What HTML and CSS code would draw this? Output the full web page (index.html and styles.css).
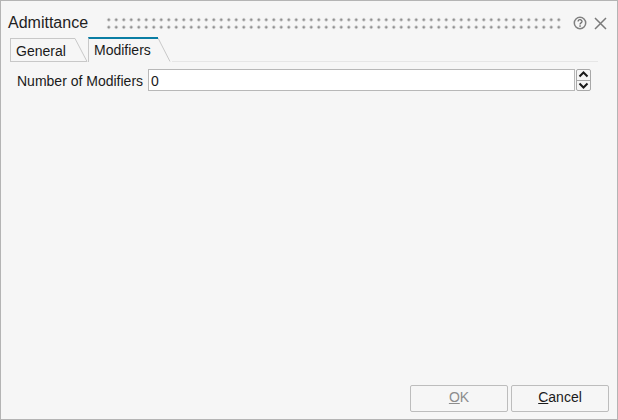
FILE: index.html
```html
<!DOCTYPE html>
<html lang="en">
<head>
    <meta charset="UTF-8">
    <meta name="viewport" content="width=device-width, initial-scale=1.0">
    <title>Admittance</title>
    <link rel="stylesheet" href="styles.css">
</head>
<body>
    <div class="dialog">
        <div class="title-bar">
            <span class="title">Admittance</span>
            <div class="grip"></div>
            <svg class="help-icon" width="14" height="14" viewBox="0 0 14 14">
                <circle cx="7" cy="7" r="5.7" fill="none" stroke="#808080" stroke-width="1.5"/>
                <path d="M5.1 5.6c0-2.5 3.9-2.5 3.9-.1 0 1.4-2 1.400-2 3" fill="none" stroke="#707070" stroke-width="1.3"/>
                <rect x="6.300" y="9.300" width="1.500" height="1.500" fill="#707070"/>
            </svg>
            <svg class="close-icon" width="13" height="13" viewBox="0 0 13 13">
                <path d="M1 1l11 11M12 1L1 12" fill="none" stroke="#7a7a7a" stroke-width="1.500"/>
            </svg>
        </div>

        <div class="tabs">
            <div class="tab">
                <span class="tab-label">General</span>
                <svg class="tab-slant" width="14" height="24" viewBox="0 0 14 24">
                    <path d="M0 .5h1L13 23.500H0" fill="#f6f6f6" stroke="#c8c8c8"/>
                </svg>
            </div>
            <div class="tab tab-active">
                <span class="tab-label">Modifiers</span>
                <svg class="tab-slant" width="14" height="25" viewBox="0 0 14 25">
                    <path d="M0 1l12 23.500" fill="none" stroke="#c8c8c8"/>
                </svg>
            </div>
            <div class="tab-rest"></div>
        </div>

        <div class="content">
            <div class="form-row">
                <label for="modifiers">Number of Modifiers</label>
                <input type="text" id="modifiers" value="0">
                <div class="spinner">
                    <div class="spin-btn">
                        <svg width="11" height="7" viewBox="0 0 11 7"><path d="M1.500 5.500l4-4 4 4" fill="none" stroke="#1a1a1a" stroke-width="2"/></svg>
                    </div>
                    <div class="spin-btn">
                        <svg width="11" height="7" viewBox="0 0 11 7"><path d="M1.500 1.500l4 4 4-4" fill="none" stroke="#1a1a1a" stroke-width="2"/></svg>
                    </div>
                </div>
            </div>
        </div>

        <div class="actions">
            <button type="button" disabled><u>O</u>K</button>
            <button type="button"><u>C</u>ancel</button>
        </div>
    </div>
</body>
</html>
```

FILE: styles.css
```css
html, body {
    margin: 0;
    padding: 0;
}

body {
    font-family: "Liberation Sans", Arial, sans-serif;
    font-size: 14px;
    color: #1a1a1a;
}

.dialog {
    width: 618px;
    height: 420px;
    box-sizing: border-box;
    border: 1px solid #b4b4b4;
    background-color: #f6f6f6;
    display: flex;
    flex-direction: column;
}

.title-bar {
    height: 36px;
    display: flex;
    align-items: center;
    padding: 8px 0 0 7px;
    box-sizing: border-box;
    flex-shrink: 0;
}

.title {
    font-size: 16px;
    color: #222;
    width: 96.5px;
}

.grip {
    width: 457.5px;
    height: 15px;
    background-image: radial-gradient(circle, #8f8f8f 1px, #c4c4c4 1.4px, transparent 1.9px);
    background-size: 7.5px 7.5px;
    margin-right: 11px;
}

.help-icon {
    margin-right: 7px;
}

.tabs {
    display: flex;
    padding-left: 9px;
    height: 25px;
    flex-shrink: 0;
}

.tab {
    display: flex;
    align-items: stretch;
    height: 24px;
    margin-top: 1px;
}

.tab-label {
    padding: 4px 5px 0 5px;
    box-sizing: border-box;
    border: 1px solid #c8c8c8;
    border-right: none;
    width: 64px;
}

.tab-active {
    margin-top: 0;
    height: 25px;
}

.tab-active .tab-label {
    width: 70px;
    border: none;
    border-top: 2px solid #0a7ea4;
    padding-top: 3px;
    padding-left: 5px;
    border-left: 1px solid #c8c8c8;
}

.tab-slant {
    display: block;
}

.tab-rest {
    width: 426px;
    height: 24px;
    border-bottom: 1px solid #e6e6e6;
}

.content {
    flex: 1;
    padding: 7px 0 0 16px;
}

.form-row {
    display: flex;
    align-items: center;
    height: 22px;
}

.form-row label {
    width: 131px;
    padding-top: 2px;
}

.form-row input {
    width: 427px;
    height: 22px;
    box-sizing: border-box;
    border: 1px solid #b8b8b8;
    padding: 1px 2px 0 2px;
    font-family: inherit;
    font-size: 14px;
    color: #1a1a1a;
    background-color: white;
    outline: none;
}

.spinner {
    width: 15px;
    height: 22px;
    margin-left: 1px;
    box-sizing: border-box;
    border: 1px solid #a8a8a8;
    border-radius: 2px;
    display: flex;
    flex-direction: column;
}

.spin-btn {
    flex: 1;
    display: flex;
    align-items: center;
    justify-content: center;
}

.spin-btn:first-child {
    border-bottom: 1px solid #a8a8a8;
}

.actions {
    display: flex;
    justify-content: flex-end;
    gap: 3px;
    padding: 0 8px 7px 0;
}

button {
    width: 98px;
    height: 27px;
    padding: 0 0 3px 0;
    background-color: #f6f6f6;
    border: 1px solid #bdbdbd;
    border-radius: 2px;
    font-family: inherit;
    font-size: 14px;
    color: #1a1a1a;
}

button:disabled {
    color: #8c8c8c;
}
```
